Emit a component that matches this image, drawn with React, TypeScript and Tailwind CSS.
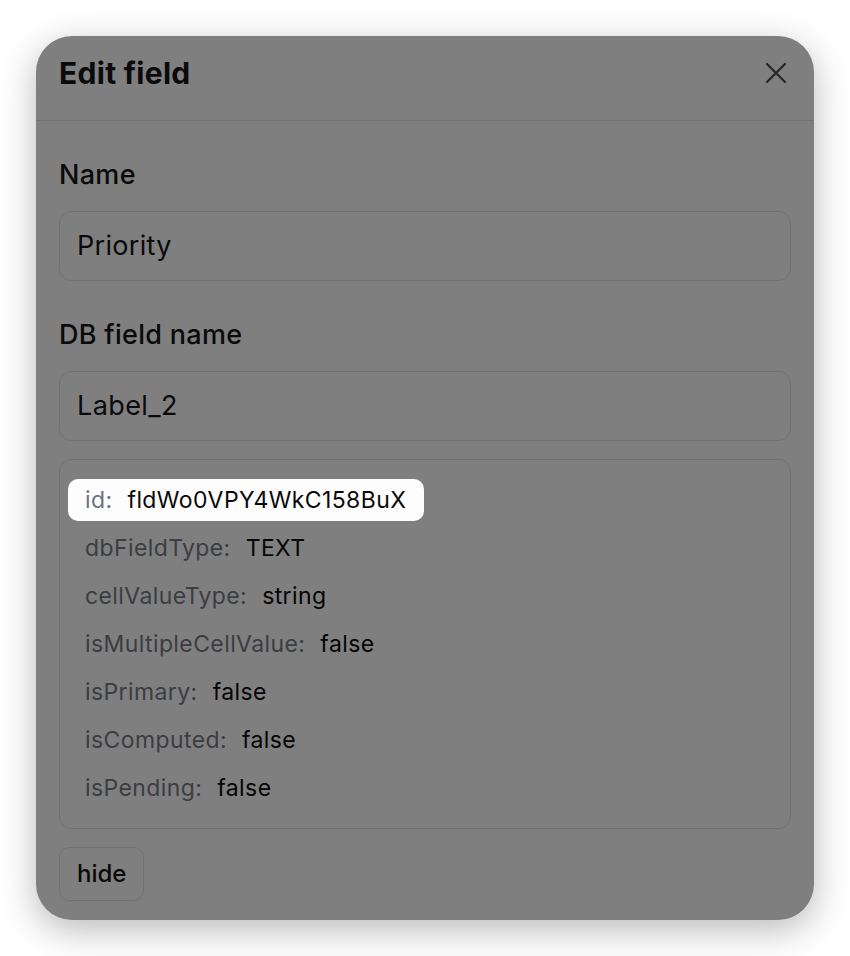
import React from "react";

const rows: { k: string; v: string; hi?: boolean }[] = [
  { k: "id:", v: "fldWo0VPY4WkC158BuX", hi: true },
  { k: "dbFieldType:", v: "TEXT" },
  { k: "cellValueType:", v: "string" },
  { k: "isMultipleCellValue:", v: "false" },
  { k: "isPrimary:", v: "false" },
  { k: "isComputed:", v: "false" },
  { k: "isPending:", v: "false" },
];

export default function App() {
  return (
    <div
      className="w-[850px] h-[956px] bg-white p-[36px]"
      style={{ fontFamily: "Inter, 'Noto Sans', sans-serif" }}
    >
      <div className="w-[778px] h-[884px] rounded-[36px] bg-[#7f7f7f] shadow-[0_10px_36px_rgba(0,0,0,0.28)] flex flex-col overflow-hidden">
        <div className="h-[85px] border-b border-[#747474] px-[23px] pt-[19px] flex items-start justify-between">
          <h1 className="text-[30px] leading-[36px] font-bold text-[#0a0a0a] tracking-[0.3px]">
            Edit field
          </h1>
          <svg
            width="20"
            height="20"
            viewBox="0 0 20 20"
            className="mt-[8px] mr-[5px]"
          >
            <path
              d="M1 1 L19 19 M19 1 L1 19"
              stroke="#262626"
              strokeWidth="2.2"
              strokeLinecap="round"
            />
          </svg>
        </div>
        <div className="px-[23px] pt-[36px] flex flex-col">
          <label className="h-[36px] leading-[36px] text-[27px] font-medium text-[#0a0a0a] tracking-[0.3px]">
            Name
          </label>
          <div className="mt-[18px] h-[70px] rounded-[12px] border border-[#737373] px-[17px] flex items-center text-[27px] text-[#0a0a0a] tracking-[0.3px]">
            Priority
          </div>
          <label className="mt-[36px] h-[36px] leading-[36px] text-[27px] font-medium text-[#0a0a0a] tracking-[0.3px]">
            DB field name
          </label>
          <div className="mt-[18px] h-[70px] rounded-[12px] border border-[#737373] px-[17px] flex items-center text-[27px] text-[#0a0a0a] tracking-[0.4px]">
            Label_2
          </div>
          <div className="mt-[18px] rounded-[12px] border border-[#737373] px-[8px] py-[19px] flex flex-col gap-[6px]">
            {rows.map((r) => (
              <div
                key={r.k}
                className={
                  "h-[42px] px-[17px] flex items-center gap-[15px] text-[23px] tracking-[0.4px] self-start rounded-[10px] " +
                  (r.hi ? "bg-[#fdfdfd]" : "")
                }
              >
                <span className={r.hi ? "text-[#6b7280]" : "text-[#3b3d42]"}>
                  {r.k}
                </span>
                <span className={r.hi ? "text-[#0a0a0a] pr-[1px]" : "text-[#050505]"}>
                  {r.v}
                </span>
              </div>
            ))}
          </div>
          <div className="mt-[18px] self-start h-[54px] px-[17px] rounded-[10px] border border-[#737373] flex items-center text-[24px] font-medium text-[#0a0a0a]">
            hide
          </div>
        </div>
      </div>
    </div>
  );
}
